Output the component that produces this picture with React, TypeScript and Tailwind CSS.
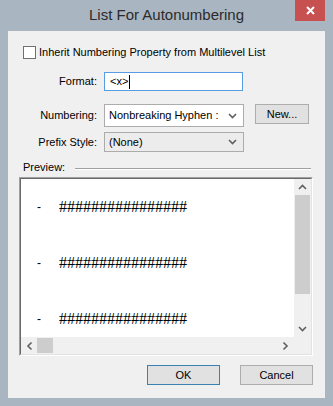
import React from 'react';

const ui = { fontFamily: '"Liberation Sans", Arial, sans-serif' };

const Chevron: React.FC<{ dir?: 'down' | 'up' | 'left' | 'right'; className?: string }> = ({ dir = 'down', className }) => {
  const rot = { down: 0, up: 180, left: 90, right: -90 }[dir];
  return (
    <svg width="9" height="6" viewBox="0 0 9 6" className={className} style={{ transform: `rotate(${rot}deg)` }}>
      <path d="M1 1 L4.5 4.5 L8 1" fill="none" stroke="#606060" strokeWidth="1.6" />
    </svg>
  );
};

const PreviewRow = () => (
  <div className="flex items-center h-[20px]">
    <span className="ml-[16px] w-[22px] text-[12px] leading-none text-black">-</span>
    <span className="text-[16px] leading-none text-black" style={{ fontFamily: '"Liberation Serif", serif' }}>
      ################
    </span>
  </div>
);

export default function App() {
  return (
    <div className="w-[333px] h-[406px] bg-[#a9b5c0] flex flex-col text-[11px] text-black whitespace-nowrap" style={ui}>
      {/* title bar */}
      <div className="h-[31px] flex items-start">
        <div className="w-[38px]" />
        <div className="flex-1 text-center text-[15px] leading-[30px] text-[#2b2b2b]">List For Autonumbering</div>
        <div className="w-[30px] h-[21px] bg-[#c75050] flex items-center justify-center">
          <svg width="9" height="9" viewBox="0 0 9 9">
            <path d="M1 1 L8 8 M8 1 L1 8" stroke="#fff" strokeWidth="2" />
          </svg>
        </div>
        <div className="w-[8px]" />
      </div>

      {/* client area */}
      <div className="flex-1 mx-[8px] mb-[8px] bg-[#f0f0f0] flex flex-col">
        <div className="flex items-center mt-[15px] ml-[15px] h-[13px]">
          <div className="w-[13px] h-[13px] border border-[#707070] bg-white" />
          <span className="ml-[3px] leading-none">Inherit Numbering Property from Multilevel List</span>
        </div>

        <div className="flex items-center mt-[13px] h-[19px]">
          <div className="w-[89px] text-right">Format:</div>
          <div className="ml-[7px] w-[139px] h-[19px] border border-[#569de5] bg-white flex items-center pl-[5px]">
            <span>&lt;x&gt;</span>
            <span className="w-px h-[14px] bg-black ml-[1px]" />
          </div>
        </div>

        <div className="flex items-center mt-[13px] h-[23px]">
          <div className="w-[89px] text-right">Numbering:</div>
          <div className="ml-[7px] w-[140px] h-[23px] border border-[#acacac] bg-white flex items-center justify-between pl-[4px] pr-[6px]">
            <span>Nonbreaking Hyphen :</span>
            <Chevron />
          </div>
          <div className="ml-[11px] w-[54px] h-[20px] self-start border border-[#adadad] bg-[#e1e1e1] flex items-center justify-center">
            New...
          </div>
        </div>

        <div className="flex items-center mt-[5px] h-[20px]">
          <div className="w-[89px] text-right">Prefix Style:</div>
          <div className="ml-[7px] w-[140px] h-[20px] border border-[#acacac] bg-[#ececec] flex items-center justify-between pl-[4px] pr-[6px]">
            <span>(None)</span>
            <Chevron />
          </div>
        </div>

        <div className="flex items-center mt-[8px] h-[14px] ml-[15px] mr-[14px]">
          <span>Preview:</span>
          <div className="flex-1 ml-[10px] mt-[3px] border-t border-[#a0a0a0] border-b border-b-white" />
        </div>

        {/* preview box */}
        <div className="mt-[3px] ml-[11px] w-[294px] h-[179px] border border-t-[#a0a0a0] border-l-[#a0a0a0] border-r-white border-b-white">
          <div className="w-full h-full border border-t-[#696969] border-l-[#696969] border-r-[#e3e3e3] border-b-[#e3e3e3] flex flex-col">
            <div className="flex-1 flex">
              <div className="flex-1 bg-white flex flex-col pt-[18px] gap-[36px]">
                <PreviewRow />
                <PreviewRow />
                <PreviewRow />
              </div>
              <div className="w-[17px] bg-[#f0f0f0] flex flex-col items-center">
                <div className="h-[16px] flex items-center justify-center">
                  <Chevron dir="up" />
                </div>
                <div className="w-[15px] h-[99px] bg-[#cdcdcd]" />
                <div className="flex-1" />
                <div className="h-[17px] flex items-center justify-center">
                  <Chevron dir="down" />
                </div>
              </div>
            </div>
            <div className="h-[17px] flex bg-[#f0f0f0]">
              <div className="w-[16px] flex items-center justify-center">
                <Chevron dir="left" />
              </div>
              <div className="w-[16px] my-[1px] bg-[#cdcdcd]" />
              <div className="flex-1" />
              <div className="w-[17px] flex items-center justify-center">
                <Chevron dir="right" />
              </div>
              <div className="w-[17px]" />
            </div>
          </div>
        </div>

        <div className="flex mt-[9px] ml-[139px] gap-[20px]">
          <div className="w-[73px] h-[20px] border border-[#3c7fb1] bg-[#e1e1e1] flex items-center justify-center">OK</div>
          <div className="w-[73px] h-[20px] border border-[#adadad] bg-[#e1e1e1] flex items-center justify-center">Cancel</div>
        </div>
      </div>
    </div>
  );
}
